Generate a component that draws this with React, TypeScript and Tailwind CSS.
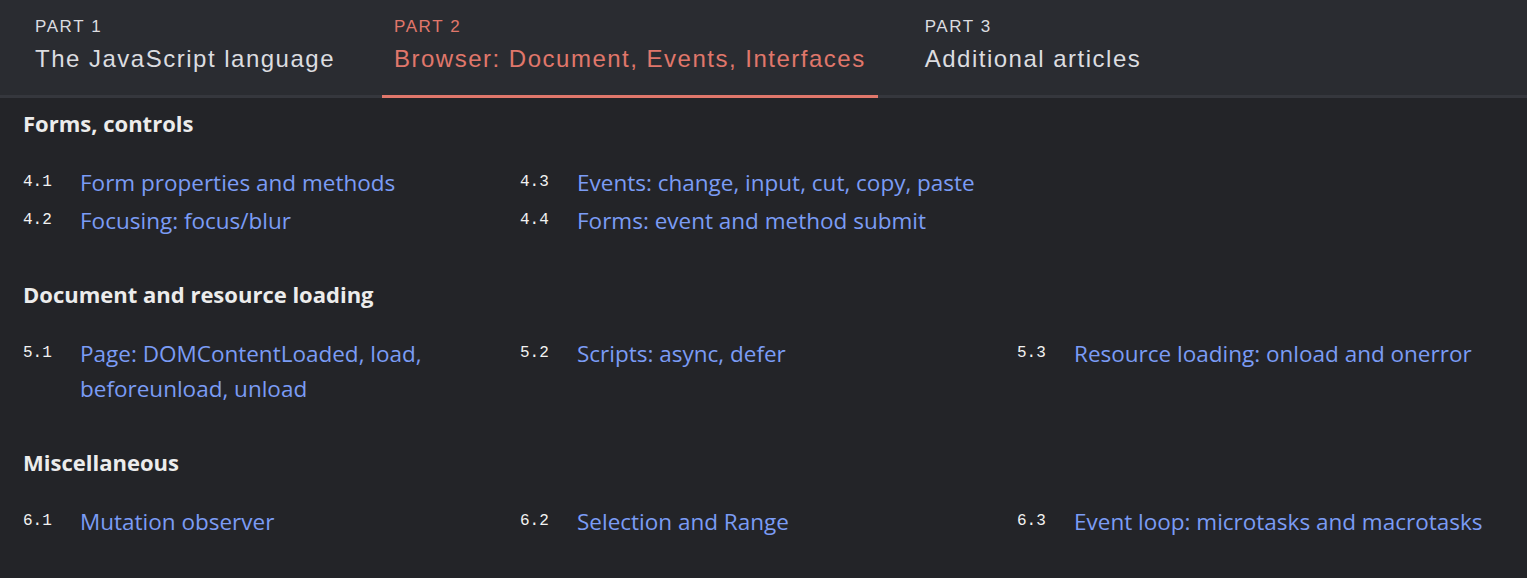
import React from "react";

type Item = { num: string; title: string };
type Section = { heading: string; columns: Item[][] };

const tabs = [
  { part: "PART 1", title: "The JavaScript language", active: false },
  { part: "PART 2", title: "Browser: Document, Events, Interfaces", active: true },
  { part: "PART 3", title: "Additional articles", active: false },
];

const sections: Section[] = [
  {
    heading: "Forms, controls",
    columns: [
      [
        { num: "4.1", title: "Form properties and methods" },
        { num: "4.2", title: "Focusing: focus/blur" },
      ],
      [
        { num: "4.3", title: "Events: change, input, cut, copy, paste" },
        { num: "4.4", title: "Forms: event and method submit" },
      ],
      [],
    ],
  },
  {
    heading: "Document and resource loading",
    columns: [
      [{ num: "5.1", title: "Page: DOMContentLoaded, load, beforeunload, unload" }],
      [{ num: "5.2", title: "Scripts: async, defer" }],
      [{ num: "5.3", title: "Resource loading: onload and onerror" }],
    ],
  },
  {
    heading: "Miscellaneous",
    columns: [
      [{ num: "6.1", title: "Mutation observer" }],
      [{ num: "6.2", title: "Selection and Range" }],
      [{ num: "6.3", title: "Event loop: microtasks and macrotasks" }],
    ],
  },
];

function Tabs() {
  return (
    <div className="flex h-[98px] gap-[35px] border-b-[3px] border-[#35373d] bg-[#2a2c31] pl-[23px] font-['Liberation_Sans',Arial,sans-serif]">
      {tabs.map((tab) => (
        <div
          key={tab.part}
          className={
            tab.active
              ? "-mb-[3px] border-b-[3px] border-[#e0776b] px-3 pt-[17px] text-[#e0776b]"
              : "px-3 pt-[17px] text-[#dcdde0]"
          }
        >
          <p className="text-[17px] leading-[20px] tracking-[1.6px]">{tab.part}</p>
          <p className="mt-[8px] text-[24px] leading-[28px] tracking-[1.5px]">{tab.title}</p>
        </div>
      ))}
    </div>
  );
}

function TopicSection({ section }: { section: Section }) {
  return (
    <section className="mb-[42px]">
      <h2 className="text-[22px] font-bold leading-[28px] text-[#ececec]">{section.heading}</h2>
      <div className="mt-[28px] grid grid-cols-[repeat(3,497px)]">
        {section.columns.map((col, i) => (
          <ul key={i} className="space-y-[3px]">
            {col.map((item) => (
              <li key={item.num} className="flex items-start">
                <span className="w-[57px] shrink-0 pt-[5px] font-['Liberation_Mono',monospace] text-[16px] leading-[25px] text-[#f2f2f2]">
                  {item.num}
                </span>
                <a className="min-w-0 flex-1 pr-[10px] text-[22.5px] leading-[35px] text-[#7b9cf5]">
                  {item.title}
                </a>
              </li>
            ))}
          </ul>
        ))}
      </div>
    </section>
  );
}

export default function App() {
  return (
    <div className="min-h-[578px] w-[1527px] bg-[#232428] font-['Open_Sans',sans-serif]">
      <Tabs />
      <div className="px-[23px] pt-[11px]">
        {sections.map((s) => (
          <TopicSection key={s.heading} section={s} />
        ))}
      </div>
    </div>
  );
}
